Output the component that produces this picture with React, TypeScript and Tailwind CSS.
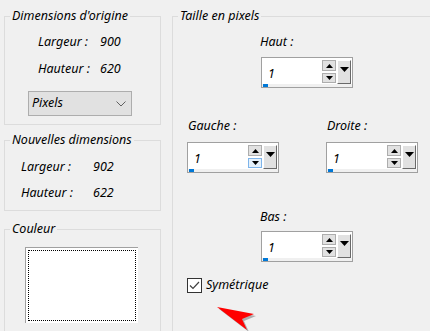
import React from "react";

function TriUp() {
  return (
    <svg width="7" height="4" viewBox="0 0 7 4" className="block">
      <path d="M0 4 L3.5 0 L7 4 Z" fill="#000" />
    </svg>
  );
}

function TriDown({ w = 7, h = 4 }: { w?: number; h?: number }) {
  return (
    <svg width={w} height={h} viewBox={`0 0 ${w} ${h}`} className="block">
      <path d={`M0 0 L${w} 0 L${w / 2} ${h} Z`} fill="#000" />
    </svg>
  );
}

function SpinBox({ value, hoverDown = false }: { value: string; hoverDown?: boolean }) {
  return (
    <div className="w-[92px] h-[31px] border border-[#a0a0a0] bg-white flex flex-col">
      <div className="flex h-[26px] pt-[2px]">
        <div className="flex-1 flex items-center pl-[6px] pt-[4px] leading-none">{value}</div>
        <div className="flex flex-col gap-[2px] w-[14px]">
          <div className="h-[11px] bg-[#e1e1e1] border border-[#adadad] flex items-center justify-center">
            <TriUp />
          </div>
          <div
            className={
              hoverDown
                ? "h-[10px] bg-[#e5f1fb] border border-[#7eb4ea] flex items-center justify-center"
                : "h-[10px] bg-[#e1e1e1] border border-[#adadad] flex items-center justify-center"
            }
          >
            <TriDown />
          </div>
        </div>
        <div className="ml-[1px] mr-[1px] w-[14px] h-[24px] bg-[#e1e1e1] border-l border-t border-white border-r border-b border-r-[#696969] border-b-[#696969] flex pt-[6px] justify-center">
          <TriDown w={9} h={5} />
        </div>
      </div>
      <div className="flex-1 bg-[#f0f0f0] flex">
        <div className="ml-[1px] w-[5px] bg-[#0078d7]" />
      </div>
    </div>
  );
}

function Legend({ children }: { children: React.ReactNode }) {
  return <legend className="ml-[5px] px-[2px] leading-[16px]">{children}</legend>;
}

export default function App() {
  return (
    <div
      className="relative w-[430px] h-[331px] overflow-hidden bg-[#f0f0f0] text-black text-[12.5px] italic flex"
      style={{ fontFamily: '"Noto Sans", "Open Sans", sans-serif' }}
    >
      {/* left column */}
      <div className="ml-[4px] w-[157px] shrink-0 flex flex-col">
        <fieldset className="shrink-0 mt-[8px] border border-[#dcdcdc] h-[117px]">
          <Legend>Dimensions d'origine</Legend>
          <div className="grid grid-cols-[62px_1fr] pl-[33px] mt-[10px] leading-[16px] gap-y-[11px]">
            <span>Largeur :</span>
            <span>900</span>
            <span>Hauteur :</span>
            <span>620</span>
          </div>
          <div className="mt-[14px] ml-[23px] w-[104px] h-[25px] bg-[#e1e1e1] border border-[#adadad] flex items-center pl-[3px] pr-[5px]">
            <span className="flex-1">Pixels</span>
            <svg width="10" height="6" viewBox="0 0 10 6">
              <path d="M0.5 0.5 L5 5 L9.5 0.5" fill="none" stroke="#606060" strokeWidth="1" />
            </svg>
          </div>
        </fieldset>

        <fieldset className="shrink-0 mt-[7px] border border-[#dcdcdc] h-[79px]">
          <Legend>Nouvelles dimensions</Legend>
          <div className="grid grid-cols-[72px_1fr] pl-[16px] mt-[11px] leading-[16px] gap-y-[10px]">
            <span>Largeur :</span>
            <span>902</span>
            <span>Hauteur :</span>
            <span>622</span>
          </div>
        </fieldset>

        <fieldset className="shrink-0 mt-[10px] border border-[#dcdcdc] h-[150px]">
          <Legend>Couleur</Legend>
          <div className="mt-[10px] ml-[20px] w-[113px] h-[76px] bg-white border-t border-l border-[#a0a0a0] p-[2px]">
            <div className="w-full h-full border border-dotted border-black" />
          </div>
        </fieldset>
      </div>

      {/* right column */}
      <div className="ml-[11px] w-[270px] shrink-0 flex flex-col">
        <fieldset className="shrink-0 mt-[8px] border border-[#dcdcdc] h-[360px]">
          <Legend>Taille en pixels</Legend>
          <div className="flex flex-col">
            <div className="ml-[87px] mt-[10px] leading-[16px]">Haut :</div>
            <div className="ml-[88px] mt-[7px]">
              <SpinBox value="1" />
            </div>

            <div className="flex mt-[30px]">
              <div className="ml-[14px] flex flex-col">
                <div className="ml-[1px] leading-[16px]">Gauche :</div>
                <div className="mt-[8px]">
                  <SpinBox value="1" hoverDown />
                </div>
              </div>
              <div className="ml-[47px] flex flex-col">
                <div className="ml-[1px] leading-[16px]">Droite :</div>
                <div className="mt-[8px]">
                  <SpinBox value="1" />
                </div>
              </div>
            </div>

            <div className="ml-[87px] mt-[36px] leading-[16px]">Bas :</div>
            <div className="ml-[88px] mt-[6px]">
              <SpinBox value="1" />
            </div>

            <div className="ml-[14px] mt-[15px] flex items-center gap-[4px]">
              <div className="w-[15px] h-[15px] border border-[#333] bg-white flex items-center justify-center">
                <svg width="11" height="9" viewBox="0 0 11 9">
                  <path d="M1 4.5 L4 7.5 L10 1" fill="none" stroke="#404040" strokeWidth="1.2" />
                </svg>
              </div>
              <span className="leading-[16px]">Symétrique</span>
            </div>
          </div>
        </fieldset>
      </div>

      {/* red pointer annotation */}
      <svg className="absolute left-[215px] top-[305px]" width="44" height="27" viewBox="0 0 44 27">
        <path d="M3 3 L40 10 L28 15 L33 26 Z" fill="#333" opacity="0.35" transform="translate(1,1)" />
        <path d="M2 2 L39 9 L27 14 L32 25 Z" fill="#ff0000" />
      </svg>
    </div>
  );
}
